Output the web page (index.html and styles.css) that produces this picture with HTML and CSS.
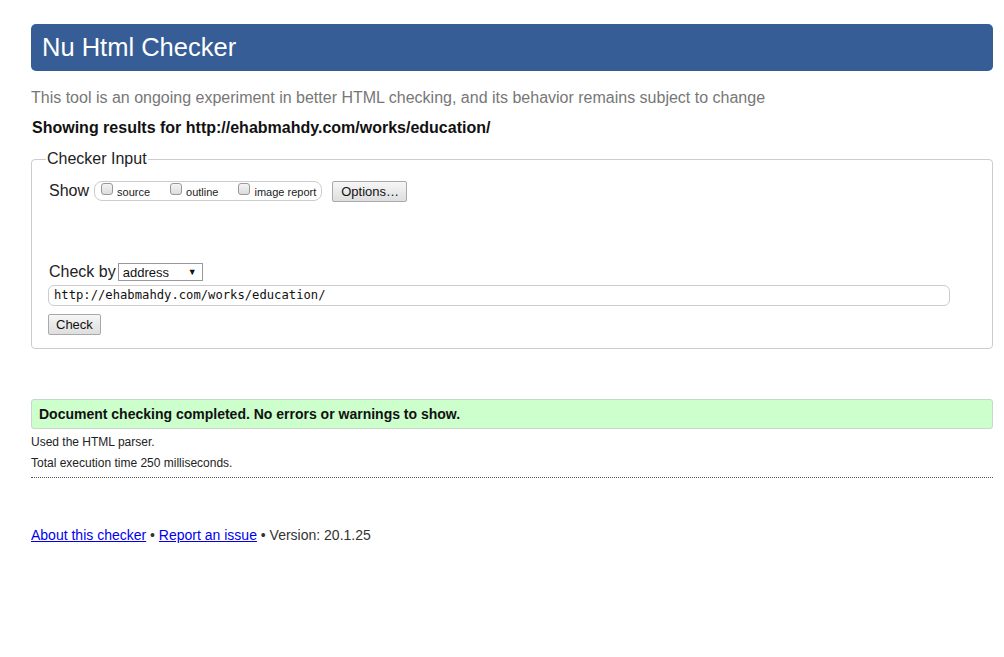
FILE: index.html
```html
<!DOCTYPE html>
<html lang="en">
<head>
<meta charset="utf-8">
<title>Nu Html Checker</title>
<link rel="stylesheet" href="styles.css">
</head>
<body>
<div class="page">
  <h1 class="banner">Nu Html Checker</h1>
  <p class="tagline">This tool is an ongoing experiment in better HTML checking, and its behavior remains subject to change</p>
  <p class="showing">Showing results for http://ehabmahdy.com/works/education/</p>
  <fieldset class="input-box">
    <legend>Checker Input</legend>
    <div class="show-row">
      <span class="label">Show</span>
      <span class="pill">
        <label class="opt"><input type="checkbox"><span>source</span></label>
        <label class="opt"><input type="checkbox"><span>outline</span></label>
        <label class="opt"><input type="checkbox"><span>image report</span></label>
      </span>
      <button class="btn">Options…</button>
    </div>
    <div class="by-row">
      <span class="label">Check by</span>
      <span class="select">address<span class="arrow">▼</span></span>
    </div>
    <div class="url-field">http://ehabmahdy.com/works/education/</div>
    <button class="btn check">Check</button>
  </fieldset>
  <div class="success">Document checking completed. No errors or warnings to show.</div>
  <p class="details first">Used the HTML parser.</p>
  <p class="details">Total execution time 250 milliseconds.</p>
  <hr class="dotted">
  <p class="footer"><a href="#">About this checker</a> • <a href="#">Report an issue</a> • Version: 20.1.25</p>
</div>
</body>
</html>
```
FILE: styles.css
```css
html, body { margin: 0; padding: 0; background: #fff; }
body { font-family: "Liberation Sans", Arial, sans-serif; color: #222; }
.page { padding: 24px 11px 0 31px; }
.banner {
  margin: 0;
  height: 47px;
  background: #365d95;
  color: #fff;
  border-radius: 5px;
  font-size: 25.5px;
  font-weight: normal;
  line-height: 47px;
  padding-left: 11px;
}
.tagline { margin: 17px 0 0 0; color: #777; font-size: 16px; line-height: 20px; }
.showing { margin: 10px 0 0 1px; font-weight: bold; font-size: 16px; line-height: 20px; color: #111; }
.input-box {
  margin: 12px 0 0 0;
  border: 1px solid #ccc;
  border-radius: 4px;
  padding: 12px 16px 13px 16px;
  min-width: 0;
}
.input-box legend { font-size: 16px; padding: 0 1px; margin-left: -2px; color: #222; }
.show-row { display: flex; align-items: center; height: 22px; margin-left: 1px; }
.label { font-size: 16px; color: #222; }
.pill {
  display: inline-flex;
  align-items: center;
  margin-left: 5px;
  height: 18px;
  border: 1px solid #ccc;
  border-radius: 8px;
  padding: 0 5px 0 6px;
  gap: 20px;
}
.opt { display: inline-flex; align-items: center; font-size: 11px; color: #222; }
.opt input {
  appearance: none;
  -webkit-appearance: none;
  margin: 0 4px 0 0;
  width: 12px;
  height: 12px;
  border: 1px solid #999;
  border-radius: 3px;
  background: linear-gradient(#f4f4f4, #dcdcdc);
  position: relative;
  top: -2px;
}
.opt span { position: relative; top: 1px; }
.btn {
  font-family: "Liberation Sans", Arial, sans-serif;
  font-size: 13px;
  color: #111;
  background: linear-gradient(#f6f6f6, #dedede);
  border: 1px solid #a9a9a9;
  border-radius: 2px;
  padding: 0 7px 0 8px;
  height: 21px;
}
.show-row .btn { margin-left: 10px; }
.by-row { display: flex; align-items: center; margin-top: 60px; margin-left: 1px; height: 20px; }
.select {
  display: inline-flex;
  align-items: center;
  justify-content: space-between;
  margin-left: 2px;
  width: 85px;
  height: 18px;
  box-sizing: border-box;
  border: 1px solid #999;
  padding: 0 5px 0 4px;
  font-size: 13px;
  color: #111;
}
.arrow { font-size: 9px; }
.url-field {
  margin-top: 3px;
  width: 902px;
  height: 21px;
  box-sizing: border-box;
  border: 1px solid #ccc;
  border-radius: 6px;
  padding: 0 5px;
  font-family: "DejaVu Sans Mono", "Liberation Mono", monospace;
  font-size: 12.2px;
  line-height: 19px;
  color: #111;
}
.btn.check { margin-top: 8px; height: 21px; padding: 0 7px; }
.success {
  margin-top: 50px;
  background: #ccffcc;
  border: 1px solid #c8d8c8;
  border-radius: 3px;
  height: 30px;
  box-sizing: border-box;
  padding-left: 7px;
  font-weight: bold;
  font-size: 14px;
  line-height: 28px;
  color: #111;
}
.details { margin: 0; font-size: 12px; line-height: 21px; color: #222; }
.details.first { margin-top: 3px; }
.dotted { margin: 3px 0 0 0; border: 0; border-top: 1px dotted #555; height: 0; }
.footer { margin: 48px 0 0 0; font-size: 14px; color: #333; line-height: 18px; }
.footer a { color: #00e; }
```
